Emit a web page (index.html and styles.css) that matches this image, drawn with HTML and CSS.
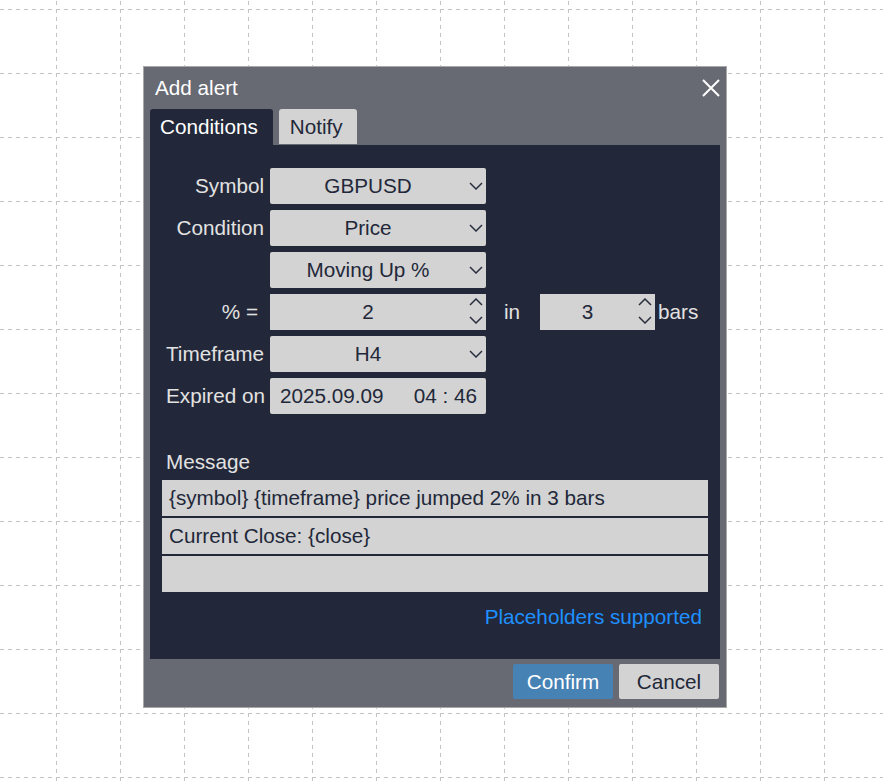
FILE: index.html
```html
<!DOCTYPE html>
<html lang="en">
<head>
    <meta charset="UTF-8">
    <title>Add alert</title>
    <link rel="stylesheet" href="styles.css">
</head>
<body>
    <svg class="grid" width="883" height="781">
        <defs>
            <pattern id="cells" x="56" y="9" width="64" height="64" patternUnits="userSpaceOnUse">
                <path d="M0.5 0 V64 M0 0.5 H64" stroke="#c4c4c4" stroke-width="1" stroke-dasharray="4 4" fill="none"/>
            </pattern>
        </defs>
        <rect width="883" height="781" fill="url(#cells)"/>
    </svg>

    <div class="dialog">
        <div class="titlebar">
            <span class="title">Add alert</span>
            <button class="close" title="Close">
                <svg width="18" height="18" viewBox="0 0 18 18"><path d="M1 1 L17 17 M17 1 L1 17" stroke="#fff" stroke-width="2" fill="none"/></svg>
            </button>
        </div>

        <div class="tabs">
            <div class="tab active">Conditions</div>
            <div class="tab">Notify</div>
        </div>

        <div class="panel">
            <div class="form">
                <label>Symbol</label>
                <div class="field select">GBPUSD<svg class="chev" width="14" height="8" viewBox="0 0 14 8"><path d="M1 1 L7 7 L13 1" /></svg></div>
                <div></div>

                <label>Condition</label>
                <div class="field select">Price<svg class="chev" width="14" height="8" viewBox="0 0 14 8"><path d="M1 1 L7 7 L13 1" /></svg></div>
                <div></div>

                <label></label>
                <div class="field select">Moving Up %<svg class="chev" width="14" height="8" viewBox="0 0 14 8"><path d="M1 1 L7 7 L13 1" /></svg></div>
                <div></div>

                <label class="pct">% =</label>
                <div class="field number">2<span class="spin"><svg width="14" height="8" viewBox="0 0 14 8"><path d="M1 7 L7 1 L13 7" /></svg><svg width="14" height="8" viewBox="0 0 14 8"><path d="M1 1 L7 7 L13 1" /></svg></span></div>
                <div class="extra">
                    <span class="in">in</span>
                    <div class="field number small">3<span class="spin"><svg width="14" height="8" viewBox="0 0 14 8"><path d="M1 7 L7 1 L13 7" /></svg><svg width="14" height="8" viewBox="0 0 14 8"><path d="M1 1 L7 7 L13 1" /></svg></span></div>
                    <span class="bars">bars</span>
                </div>

                <label>Timeframe</label>
                <div class="field select">H4<svg class="chev" width="14" height="8" viewBox="0 0 14 8"><path d="M1 1 L7 7 L13 1" /></svg></div>
                <div></div>

                <label>Expired on</label>
                <div class="field date"><span>2025.09.09</span><span class="time">04 : 46</span></div>
                <div></div>
            </div>

            <div class="message">
                <div class="msg-label">Message</div>
                <div class="msg-line">{symbol} {timeframe} price jumped 2% in 3 bars</div>
                <div class="msg-line">Current Close: {close}</div>
                <div class="msg-line"></div>
                <div class="hint">Placeholders supported</div>
            </div>
        </div>

        <div class="footer">
            <button class="btn primary">Confirm</button>
            <button class="btn">Cancel</button>
        </div>
    </div>
</body>
</html>
```

FILE: styles.css
```css
body {
    margin: 0;
    background-color: #fff;
    font-family: 'Liberation Sans', Arial, sans-serif;
    font-size: 20.7px;
    position: relative;
    width: 883px;
    height: 781px;
    overflow: hidden;
}
.grid {
    position: absolute;
    left: 0;
    top: 0;
}
.dialog {
    position: relative;
    margin: 66px 0 0 143px;
    width: 582px;
    height: 640px;
    border: 1px solid #a8a8a8;
    background-color: #676a72;
    display: flex;
    flex-direction: column;
}
.titlebar {
    height: 42px;
    display: flex;
    align-items: center;
    justify-content: space-between;
    padding: 0 6px 0 11px;
}
.title {
    color: #fff;
    line-height: 42px;
}
.close {
    background: none;
    border: none;
    padding: 0;
    width: 18px;
    height: 18px;
    margin-top: -1px;
    cursor: pointer;
}
.close svg {
    display: block;
}
.tabs {
    display: flex;
    gap: 6px;
    padding: 0 6px;
    height: 36px;
}
.tab {
    height: 35px;
    line-height: 35px;
    padding: 0 14px 0 11px;
    background-color: #d3d3d3;
    color: #222839;
    border-radius: 3px 3px 0 0;
}
.tab.active {
    height: 36px;
    line-height: 36px;
    padding: 0 15px 0 10px;
    background-color: #222839;
    color: #fff;
}
.panel {
    margin: 0 6px;
    height: 514px;
    box-sizing: border-box;
    background-color: #222839;
    padding: 23px 12px 0 12px;
}
.form {
    display: grid;
    grid-template-columns: 98px 216px auto;
    grid-auto-rows: 36px;
    gap: 6px;
    padding-left: 4px;
}
.form label {
    color: #e2e2e2;
    text-align: right;
    line-height: 36px;
    white-space: nowrap;
}
.form label.pct {
    padding-right: 6px;
}
.field {
    position: relative;
    background-color: #d3d3d3;
    color: #222839;
    border-radius: 2px;
    line-height: 36px;
    box-sizing: border-box;
}
.select,
.number {
    text-align: center;
    padding-right: 20px;
}
.chev {
    position: absolute;
    right: 3px;
    top: 14px;
}
.field svg path {
    stroke: #2a2f3d;
    stroke-width: 1.5;
    fill: none;
}
.number {
    border-radius: 0;
}
.spin {
    position: absolute;
    right: 3px;
    top: 4px;
    display: flex;
    flex-direction: column;
    gap: 10px;
}
.spin svg {
    display: block;
}
.date {
    display: flex;
    padding: 0 8px 0 10px;
    white-space: nowrap;
}
.time {
    margin-left: auto;
    padding-right: 1px;
    word-spacing: 0;
}
.extra {
    display: flex;
    align-items: center;
}
.in {
    color: #e2e2e2;
    margin: 0 20px 0 12px;
}
.small {
    width: 115px;
}
.bars {
    color: #e2e2e2;
    margin-left: 3px;
}
.message {
    margin-top: 36px;
}
.msg-label {
    color: #e2e2e2;
    line-height: 24px;
    padding-left: 4px;
    margin-bottom: 6px;
}
.msg-line {
    height: 36px;
    line-height: 36px;
    background-color: #d3d3d3;
    color: #222839;
    padding-left: 7px;
    margin-bottom: 2px;
}
.hint {
    color: #1e90ff;
    text-align: right;
    line-height: 24px;
    margin-top: 13px;
    padding-right: 6px;
}
.footer {
    display: flex;
    justify-content: flex-end;
    gap: 6px;
    padding: 5px 7px 0 0;
}
.btn {
    width: 100px;
    height: 35px;
    border: none;
    border-radius: 2px;
    font-family: inherit;
    font-size: 20.7px;
    background-color: #d3d3d3;
    color: #222839;
    cursor: pointer;
}
.btn.primary {
    background-color: #4682b4;
    color: #fff;
}
```
